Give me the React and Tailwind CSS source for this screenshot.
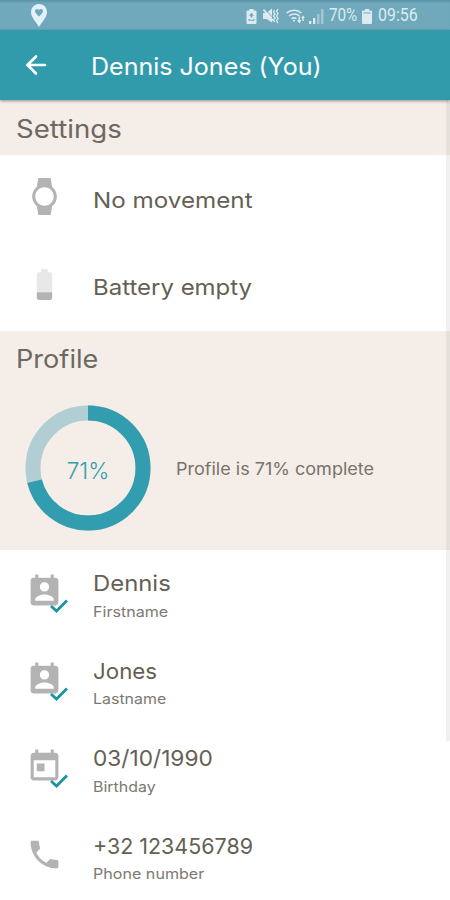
import { MdWatch, MdPermContactCalendar, MdToday, MdPhone } from 'react-icons/md'

const fields = [
  { icon: MdPermContactCalendar, value: 'Dennis', label: 'Firstname', done: true, valueClass: 'scale-x-[1.085]', labelClass: 'scale-x-[1.11]' },
  { icon: MdPermContactCalendar, value: 'Jones', label: 'Lastname', done: true, valueClass: 'scale-x-[1.015]', labelClass: 'scale-x-[1.1]' },
  { icon: MdToday, value: '03/10/1990', label: 'Birthday', done: true, valueClass: 'scale-x-[1.03]', labelClass: 'scale-x-[1.1]' },
  { icon: MdPhone, value: '+32 123456789', label: 'Phone number', done: false, valueClass: 'scale-x-[0.975]', labelClass: 'scale-x-[1.11]' },
]

function BatteryIcon() {
  return (
    <svg viewBox="0 0 24 24" className="size-[37px]">
      <path fill="#e8e8e8" d="M17 5.33C17 4.6 16.4 4 15.67 4H14V2h-4v2H8.33C7.6 4 7 4.6 7 5.33V17h10z" />
      <path fill="#b3b3b3" d="M7 17v3.67C7 21.4 7.6 22 8.33 22h7.33c.74 0 1.34-.6 1.34-1.33V17z" />
    </svg>
  )
}

function StatusBar() {
  return (
    <div className="flex h-[30px] items-center bg-[#70a9bb] pl-[31px] pr-[31px] text-[#dcebf2] shadow-[inset_0_3px_2px_-1px_#5b97a8]">
      <svg width="16" height="23" viewBox="0 0 16 23" className="mt-px shrink-0">
        <path fill="#e4f1fa" fillRule="evenodd" d="M8 0a8 8 0 0 0-8 8c0 5.4 5.2 10 8 15 2.8-5 8-9.6 8-15a8 8 0 0 0-8-8zm0 12.4C5.6 10.4 4 9 4 7.1c0-2.3 2.8-2.9 4-1 1.2-1.9 4-1.3 4 1 0 1.9-1.6 3.3-4 5.3z" />
      </svg>
      <div className="ml-auto mt-[2px] flex items-center">
        <svg width="11" height="15" viewBox="0 0 11 15">
          <path fill="currentColor" fillRule="evenodd" d="M3.5 0h4v1.5H9.5q1 0 1 1V14q0 1-1 1h-8q-1 0-1-1V2.500q0-1 1-1h2zM5.500 3.800 3 6.800h1.600v1.700h1.800V6.800H8zM2.500 10v1.800h6V10H7.300v.7H3.700V10z" />
        </svg>
        <svg width="16" height="16" viewBox="0 0 16 16" className="ml-[6px]">
          <path fill="currentColor" d="M0 5h3.500L9 .5v14L3.500 11H0z" />
          <path stroke="#70a9bb" strokeWidth=".9" d="M2 1l9 10" />
          <path fill="none" stroke="currentColor" strokeWidth="1.700" d="M.5 1.500l9.500 11" />
          <path fill="none" stroke="currentColor" strokeWidth="1.300" d="M11.500 2l-1 2 1.500 2-1.500 2 1.500 2-1.500 2 1 2M15 1l-1.500 2.300L15 5.600 13.500 8 15 10.300l-1.500 2.300L15 15" />
        </svg>
        <svg width="20" height="16" viewBox="0 0 20 16" className="ml-[7px]">
          <g fill="none" stroke="currentColor" strokeWidth="1.500">
            <path d="M.5 5a11.500 11.500 0 0 1 15 0M3 8a8 8 0 0 1 10.500 0M5.500 10.700a4.500 4.500 0 0 1 5 0" />
          </g>
          <path fill="currentColor" d="M6.500 12h3L8 14zM11 12h1.500V8.500H14V12h1.500l-2.200 3.500zM15 10l2-2.500 2 2.500h-1.300v3h-1.400v-3z" />
        </svg>
        <svg width="15" height="15" viewBox="0 0 15 15" className="ml-[3px]">
          <path fill="currentColor" d="M0 12h2.300v3H0zM4 9h2.300v6H4z" />
          <path fill="currentColor" opacity=".45" d="M8 5h2.500v10H8zM12 0h2.500v15H12z" />
        </svg>
        <span className="ml-[5px] w-[32px] origin-left scale-x-[0.87] whitespace-nowrap font-[Roboto] text-[17.5px] leading-none">70%</span>
        <svg width="10" height="15" viewBox="0 0 10 15" className="ml-px">
          <path fill="currentColor" d="M3 0h4v1.500h2q1 0 1 1V14q0 1-1 1H1q-1 0-1-1V2.500q0-1 1-1h2z" />
          <path fill="#70a9bb" opacity=".5" d="M1.500 3h7v2h-7z" />
        </svg>
        <span className="ml-[6px] w-[41px] origin-left scale-x-[0.91] whitespace-nowrap font-[Roboto] text-[17.5px] leading-none">09:56</span>
      </div>
    </div>
  )
}

function ProgressRing({ percent }) {
  const r = 55
  const length = 2 * Math.PI * r
  return (
    <svg width="126" height="126" viewBox="0 0 126 126" className="shrink-0">
      <g fill="none" strokeWidth="15" transform="rotate(-90 63 63)">
        <circle cx="63" cy="63" r={r} stroke="#b1ced4" />
        <circle cx="63" cy="63" r={r} stroke="#319dae" strokeDasharray={`${(length * percent) / 100} ${length}`} />
      </g>
      <text x="63" y="74" textAnchor="middle" fill="#319dae" fontSize="22.5" fontWeight="350">{percent}%</text>
    </svg>
  )
}

export default function App() {
  return (
    <div className="relative h-[900px] w-[450px] overflow-hidden bg-white font-[Inter,sans-serif] text-[#655f54]">
      <StatusBar />
      <header className="relative z-10 flex h-[70px] items-center bg-[#319bac] pl-[25px] text-white shadow-[0_1px_3px_rgba(0,0,0,0.4)]">
        <svg width="22" height="22" viewBox="0 0 22 22" fill="none" stroke="currentColor" strokeWidth="2.700" strokeLinecap="round">
          <path d="M20 11H3M11 2.500 2.500 11l8.500 8.500" />
        </svg>
        <h1 className="ml-[44px] mt-[3px] origin-left scale-x-[1.043] whitespace-nowrap text-[24px] leading-none">Dennis Jones (You)</h1>
      </header>

      <section>
        <h2 className="h-[55px] bg-[#f5eee8] pl-[15.5px] pt-[13px] text-[25px] leading-[32px] text-[#6c6862]">
          <span className="inline-block origin-left scale-x-[1.105]">Settings</span>
        </h2>
        <div className="flex h-[87.5px] pl-[26px] pt-[23px]">
          <MdWatch className="size-[37px] text-[#b3b3b3]" />
          <span className="ml-[29.5px] mt-[7px] h-[30px] origin-left scale-x-[1.1] whitespace-nowrap text-[22px] leading-[30px]">No movement</span>
        </div>
        <div className="flex h-[88.5px] pl-[26px] pt-[23px]">
          <BatteryIcon />
          <span className="ml-[29.5px] mt-[6px] h-[30px] origin-left scale-x-[1.09] whitespace-nowrap text-[22px] leading-[30px]">Battery empty</span>
        </div>
      </section>

      <section className="h-[219px] bg-[#f5eee8]">
        <h2 className="pl-[15.5px] pt-[12px] text-[25px] leading-[32px] text-[#6c6862]">
          <span className="inline-block origin-left scale-x-[1.085]">Profile</span>
        </h2>
        <div className="mt-[30px] flex items-center pl-[25px]">
          <ProgressRing percent={71} />
          <span className="ml-[24.5px] mt-px origin-left scale-x-[1.06] whitespace-nowrap text-[17px] leading-6 text-[#77726b]">Profile is 71% complete</span>
        </div>
      </section>

      <section>
        {fields.map(({ icon: Icon, value, label, done, valueClass, labelClass }) => (
          <div key={label} className="flex h-[87.5px] pl-[26px] pt-[18px]">
            <div className="relative mt-[5px] size-[37px]">
              <Icon className="size-[37px] text-[#b3b3b3]" />
              {done && (
                <svg width="18" height="14" viewBox="0 0 18 14" className="absolute left-[24px] top-[26px]">
                  <path d="M1 7l5.500 5L17 1.500" fill="none" stroke="#1d93a3" strokeWidth="2.900" />
                </svg>
              )}
            </div>
            <div className="ml-[29.5px] whitespace-nowrap">
              <div className={`origin-left text-[22px] leading-[30px] ${valueClass}`}>{value}</div>
              <div className={`mt-[3.5px] origin-left text-[14.5px] leading-[20px] text-[#7d7972] ${labelClass}`}>{label}</div>
            </div>
          </div>
        ))}
      </section>

      <div className="absolute right-0 top-[100px] z-0 h-[641px] w-[4px] bg-black/6" />
    </div>
  )
}
